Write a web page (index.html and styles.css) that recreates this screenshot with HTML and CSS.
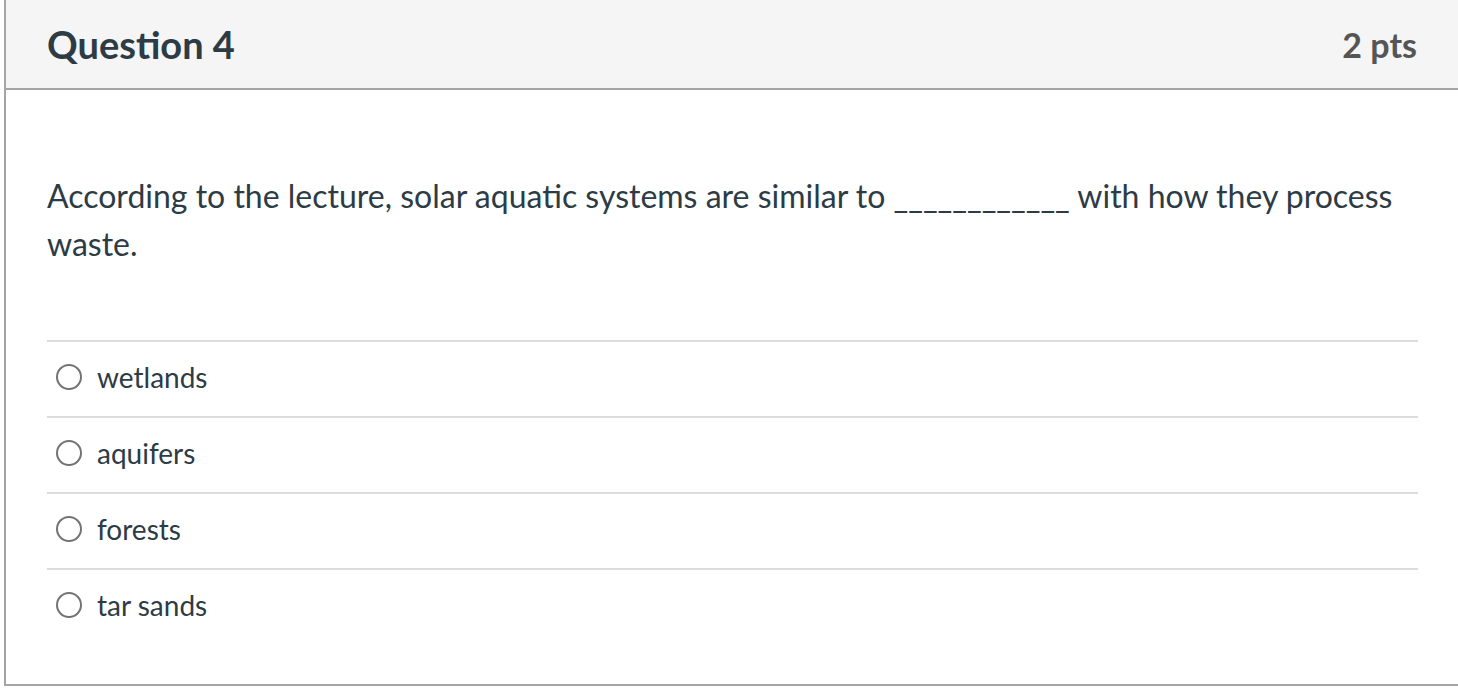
FILE: index.html
```html
<!DOCTYPE html>
<html>
<head>
<meta charset="utf-8">
<link rel="stylesheet" href="styles.css">
</head>
<body>
<div class="panel">
  <div class="header">
    <h2 class="title">Question 4</h2>
    <span class="points">2 pts</span>
  </div>
  <div class="content">
    <p class="question">According to the lecture, solar aquatic systems are similar to ____________ with how they process waste.</p>
    <div class="answers">
      <label class="answer"><span class="radio"></span><span class="answer-text">wetlands</span></label>
      <label class="answer"><span class="radio"></span><span class="answer-text">aquifers</span></label>
      <label class="answer"><span class="radio"></span><span class="answer-text">forests</span></label>
      <label class="answer"><span class="radio"></span><span class="answer-text">tar sands</span></label>
    </div>
  </div>
</div>
</body>
</html>
```
FILE: styles.css
```css
html, body {
  margin: 0;
  padding: 0;
  background: #ffffff;
  overflow: hidden;
}
body {
  font-family: Lato, "Liberation Sans", sans-serif;
  color: #2d3b45;
  padding-left: 4px;
}
.panel {
  border-left: 2px solid #a5a5a5;
  border-bottom: 2px solid #a5a5a5;
  height: 686px;
  box-sizing: border-box;
}
.header {
  background: #f5f5f5;
  height: 88px;
  border-bottom: 2px solid #a5a5a5;
  display: flex;
  align-items: center;
  justify-content: space-between;
  padding: 0 41px 0 41px;
  box-sizing: content-box;
}
.title {
  margin: 0;
  font-size: 38px;
  font-weight: 700;
  color: #2d3b45;
}
.points {
  font-size: 34px;
  font-weight: 700;
  color: #555555;
}
.content {
  padding: 82px 40px 0 41px;
}
.question {
  margin: 0;
  font-size: 32px;
  line-height: 48px;
  color: #2d3b45;
}
.answers {
  margin-top: 72px;
  display: flex;
  flex-direction: column;
}
.answer {
  display: flex;
  align-items: center;
  height: 76px;
  box-sizing: border-box;
  padding-bottom: 5px;
  border-top: 2px solid #dcdcdc;
  gap: 15px;
  padding-left: 9px;
}
.radio {
  width: 26px;
  height: 26px;
  border: 2px solid #737373;
  border-radius: 50%;
  box-sizing: border-box;
}
.answer-text {
  font-size: 28px;
  color: #2d3b45;
}
```
